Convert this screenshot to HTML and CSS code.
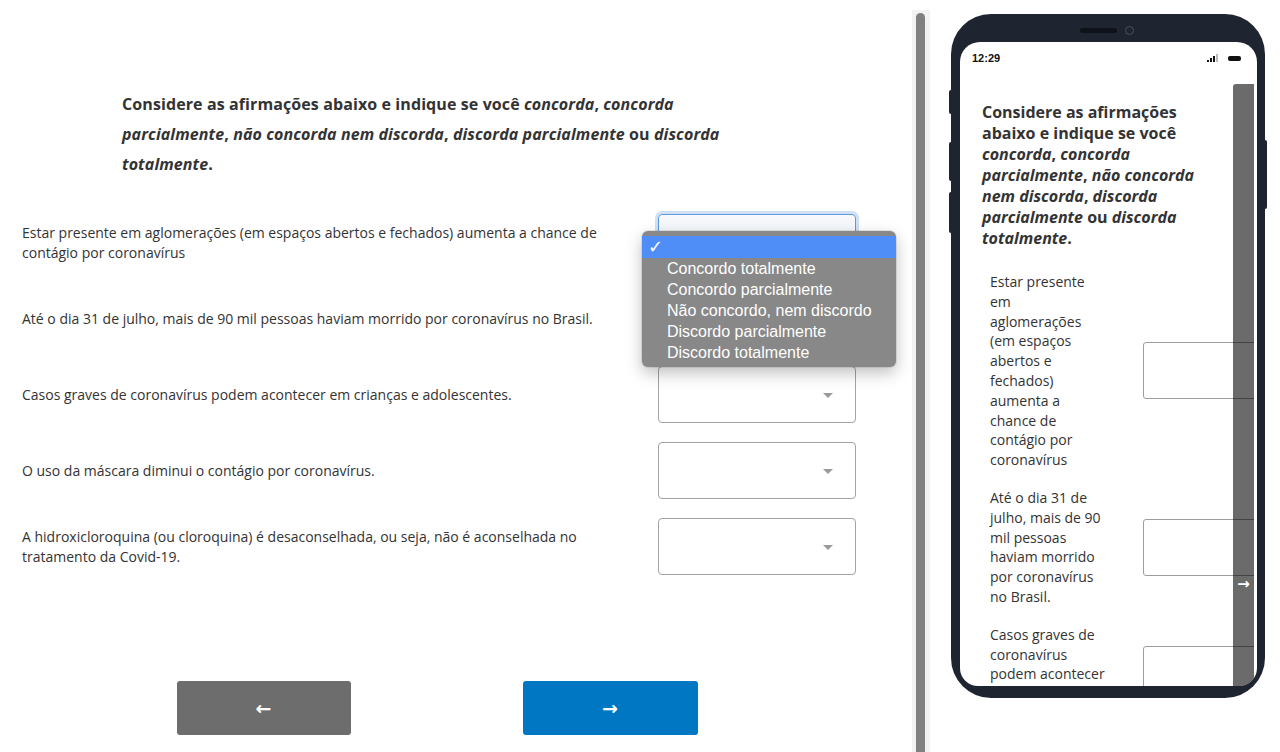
FILE: index.html
```html
<!DOCTYPE html>
<html lang="pt-BR">
  <head>
    <meta charset="UTF-8" />
    <meta name="viewport" content="width=device-width, initial-scale=1.0" />
    <title>Questionário</title>
    <link rel="stylesheet" href="styles.css">
  </head>
  <body>
    <div class="app">
      <main class="survey">
        <h3 class="prompt">Considere as afirmações abaixo e indique se você <em>concorda</em>, <em>concorda parcialmente</em>, <em>não concorda nem discorda</em>, <em>discorda parcialmente</em> ou <em>discorda totalmente</em>.</h3>

        <div class="questions">
          <div class="row">
            <label class="q">Estar presente em aglomerações (em espaços abertos e fechados) aumenta a chance de contágio por coronavírus</label>
            <div class="select focused">
              <ul class="menu">
                <li class="picked">✓</li>
                <li>Concordo totalmente</li>
                <li>Concordo parcialmente</li>
                <li>Não concordo, nem discordo</li>
                <li>Discordo parcialmente</li>
                <li>Discordo totalmente</li>
              </ul>
            </div>
          </div>
          <div class="row">
            <label class="q">Até o dia 31 de julho, mais de 90 mil pessoas haviam morrido por coronavírus no Brasil.</label>
            <div class="select"></div>
          </div>
          <div class="row">
            <label class="q">Casos graves de coronavírus podem acontecer em crianças e adolescentes.</label>
            <div class="select"></div>
          </div>
          <div class="row">
            <label class="q">O uso da máscara diminui o contágio por coronavírus.</label>
            <div class="select"></div>
          </div>
          <div class="row">
            <label class="q">A hidroxicloroquina (ou cloroquina) é desaconselhada, ou seja, não é aconselhada no tratamento da Covid-19.</label>
            <div class="select"></div>
          </div>
        </div>

        <div class="nav">
          <button class="btn back">&larr;</button>
          <button class="btn next">&rarr;</button>
        </div>
      </main>

      <div class="divider"><div class="thumb"></div></div>

      <aside class="preview">
        <div class="phone">
          <span class="key key1"></span>
          <span class="key key2"></span>
          <span class="key key3"></span>
          <span class="key key4"></span>
          <div class="earpiece"><span class="speaker"></span><span class="camera"></span></div>
          <div class="screen">
            <div class="status">
              <span class="clock">12:29</span>
              <span class="icons">
                <svg width="11" height="8" viewBox="0 0 11 8"><rect x="0" y="6" width="2" height="2" fill="#111"/><rect x="3" y="4" width="2" height="4" fill="#111"/><rect x="6" y="2" width="2" height="6" fill="#111"/><rect x="9" y="0" width="2" height="8" fill="#bbb"/></svg>
                <span class="battery"></span>
              </span>
            </div>
            <div class="viewport">
              <div class="mini">
                <h3 class="mini-prompt">Considere as afirmações abaixo e indique se você <em>concorda</em>, <em>concorda parcialmente</em>, <em>não concorda nem discorda</em>, <em>discorda parcialmente</em> ou <em>discorda totalmente</em>.</h3>
                <div class="mini-row">
                  <span class="mini-q">Estar presente em aglomerações (em espaços abertos e fechados) aumenta a chance de contágio por coronavírus</span>
                  <div class="mini-select"></div>
                </div>
                <div class="mini-row">
                  <span class="mini-q">Até o dia 31 de julho, mais de 90 mil pessoas haviam morrido por coronavírus no Brasil.</span>
                  <div class="mini-select"></div>
                </div>
                <div class="mini-row">
                  <span class="mini-q">Casos graves de coronavírus podem acontecer em crianças e adolescentes.</span>
                  <div class="mini-select"></div>
                </div>
              </div>
              <div class="mini-bar"><span>&rarr;</span></div>
            </div>
          </div>
        </div>
      </aside>
    </div>
  </body>
</html>
```

FILE: styles.css
```css
* {
  box-sizing: border-box;
}
body {
  margin: 0;
  background: #fff;
  color: #333;
  font-family: "Open Sans", "Noto Sans", sans-serif;
  overflow: hidden;
}
.app {
  display: flex;
  height: 752px;
}

/* questionário */
.survey {
  width: 912px;
  flex-shrink: 0;
  padding: 89px 0 0 22px;
}
.prompt {
  margin: 0 0 0 100px;
  width: 640px;
  font-size: 16px;
  line-height: 30px;
  font-weight: 700;
  letter-spacing: 0.1px;
}
.prompt em {
  font-style: italic;
}
.questions {
  margin-top: 35px;
  width: 834px;
}
.row {
  display: flex;
  align-items: center;
  min-height: 57px;
  margin-bottom: 19px;
}
.q {
  flex: 1;
  padding-right: 30px;
  font-size: 14px;
  line-height: 20px;
}
.select {
  position: relative;
  width: 198px;
  height: 57px;
  flex-shrink: 0;
  border: 1px solid #a3a3a3;
  border-radius: 4px;
  background: #fff;
}
.select::after {
  content: "";
  position: absolute;
  right: 22px;
  top: 26px;
  border-left: 5px solid transparent;
  border-right: 5px solid transparent;
  border-top: 5px solid #9a9a9a;
}
.select.focused {
  border-color: #5d9ae0;
  background: linear-gradient(#f7f9fc, #e9eff7);
  box-shadow: 0 0 0 3px rgba(120, 170, 230, 0.35);
}
.select.focused::after {
  display: none;
}
.menu {
  position: absolute;
  left: -17px;
  top: 16px;
  z-index: 5;
  width: 254px;
  margin: 0;
  padding: 5px 0 4px;
  list-style: none;
  background: #888;
  border-radius: 6px;
  box-shadow: 0 6px 16px rgba(0, 0, 0, 0.25), 0 0 0 1px rgba(0, 0, 0, 0.08);
  color: #fff;
  font-family: "Liberation Sans", Arial, sans-serif;
  font-size: 16px;
  line-height: 21px;
}
.menu li {
  padding-left: 25px;
}
.menu li.picked {
  height: 22px;
  padding-left: 6px;
  background: #4f8ef6;
  font-family: "DejaVu Sans", sans-serif;
  font-size: 18px;
  font-weight: 700;
  line-height: 22px;
}
.nav {
  display: flex;
  justify-content: center;
  gap: 172px;
  width: 830px;
  margin-top: 106px;
}
.btn {
  width: 174px;
  height: 54px;
  border: none;
  border-radius: 3px;
  color: #fff;
  font-family: "DejaVu Sans", sans-serif;
  font-size: 19px;
  font-weight: 700;
  cursor: pointer;
}
.back {
  background: #6d6d6d;
}
.next {
  width: 175px;
  background: #0077c2;
}

/* barra divisória */
.divider {
  width: 18px;
  flex-shrink: 0;
  margin-top: 10px;
  background: #f2f2f2;
  display: flex;
  justify-content: center;
}
.thumb {
  width: 9px;
  margin-top: 3px;
  margin-left: -1px;
  background: #808080;
  border-radius: 5px 5px 0 0;
}

/* pré-visualização no celular */
.preview {
  flex: 1;
  padding: 14px 0 0 21px;
}
.phone {
  position: relative;
  width: 314px;
  height: 684px;
  padding: 28px 8px 12px 9px;
  background: #1f2530;
  border-radius: 40px;
}
.key {
  position: absolute;
  width: 4px;
  background: #1f2530;
  border-radius: 2px;
}
.key1 { left: -2px; top: 76px; height: 24px; }
.key2 { left: -2px; top: 128px; height: 39px; }
.key3 { left: -2px; top: 178px; height: 41px; }
.key4 { right: -2px; top: 126px; height: 69px; }
.earpiece {
  position: absolute;
  top: 12px;
  left: 129px;
  display: flex;
  align-items: center;
  gap: 8px;
}
.speaker {
  width: 37px;
  height: 5px;
  border-radius: 3px;
  background: #0f1218;
}
.camera {
  width: 9px;
  height: 9px;
  border-radius: 50%;
  border: 1.5px solid #4a515c;
}
.screen {
  height: 100%;
  background: #fff;
  border-radius: 20px 20px 18px 18px;
  overflow: hidden;
  display: flex;
  flex-direction: column;
}
.status {
  height: 42px;
  flex-shrink: 0;
  display: flex;
  justify-content: space-between;
  align-items: flex-start;
  padding: 9px 16px 0 12px;
  font-family: "Liberation Sans", Arial, sans-serif;
  font-size: 11px;
  line-height: 14px;
  font-weight: 700;
  color: #111;
}
.icons {
  display: flex;
  align-items: center;
  gap: 10px;
  height: 14px;
}
.battery {
  width: 13px;
  height: 5px;
  border-radius: 2px;
  background: #111;
}
.viewport {
  position: relative;
  flex: 1;
  margin-right: 3px;
  overflow: hidden;
}
.mini {
  padding: 18px 0 0 22px;
}
.mini-prompt {
  margin: 0;
  width: 240px;
  font-size: 16px;
  line-height: 21px;
  font-weight: 700;
}
.mini-row {
  display: flex;
  align-items: center;
  margin: 23px 0 0 8px;
}
.mini-row + .mini-row {
  margin-top: 18px;
}
.mini-q {
  width: 115.4px;
  flex-shrink: 0;
  font-size: 14px;
  line-height: 19.8px;
}
.mini-select {
  width: 198px;
  height: 57px;
  flex-shrink: 0;
  margin-left: 37.6px;
  border: 1px solid #9d9d9d;
  border-radius: 3px;
}
.mini-bar {
  position: absolute;
  top: 0;
  right: 0;
  bottom: 0;
  width: 21px;
  background: rgba(0, 0, 0, 0.58);
  border-radius: 3px 0 0 0;
  color: #fff;
  font-family: "DejaVu Sans", sans-serif;
  font-size: 15px;
  font-weight: 700;
  line-height: 17px;
  text-align: center;
}
.mini-bar span {
  position: absolute;
  left: 0;
  right: 0;
  top: 492px;
}
```
